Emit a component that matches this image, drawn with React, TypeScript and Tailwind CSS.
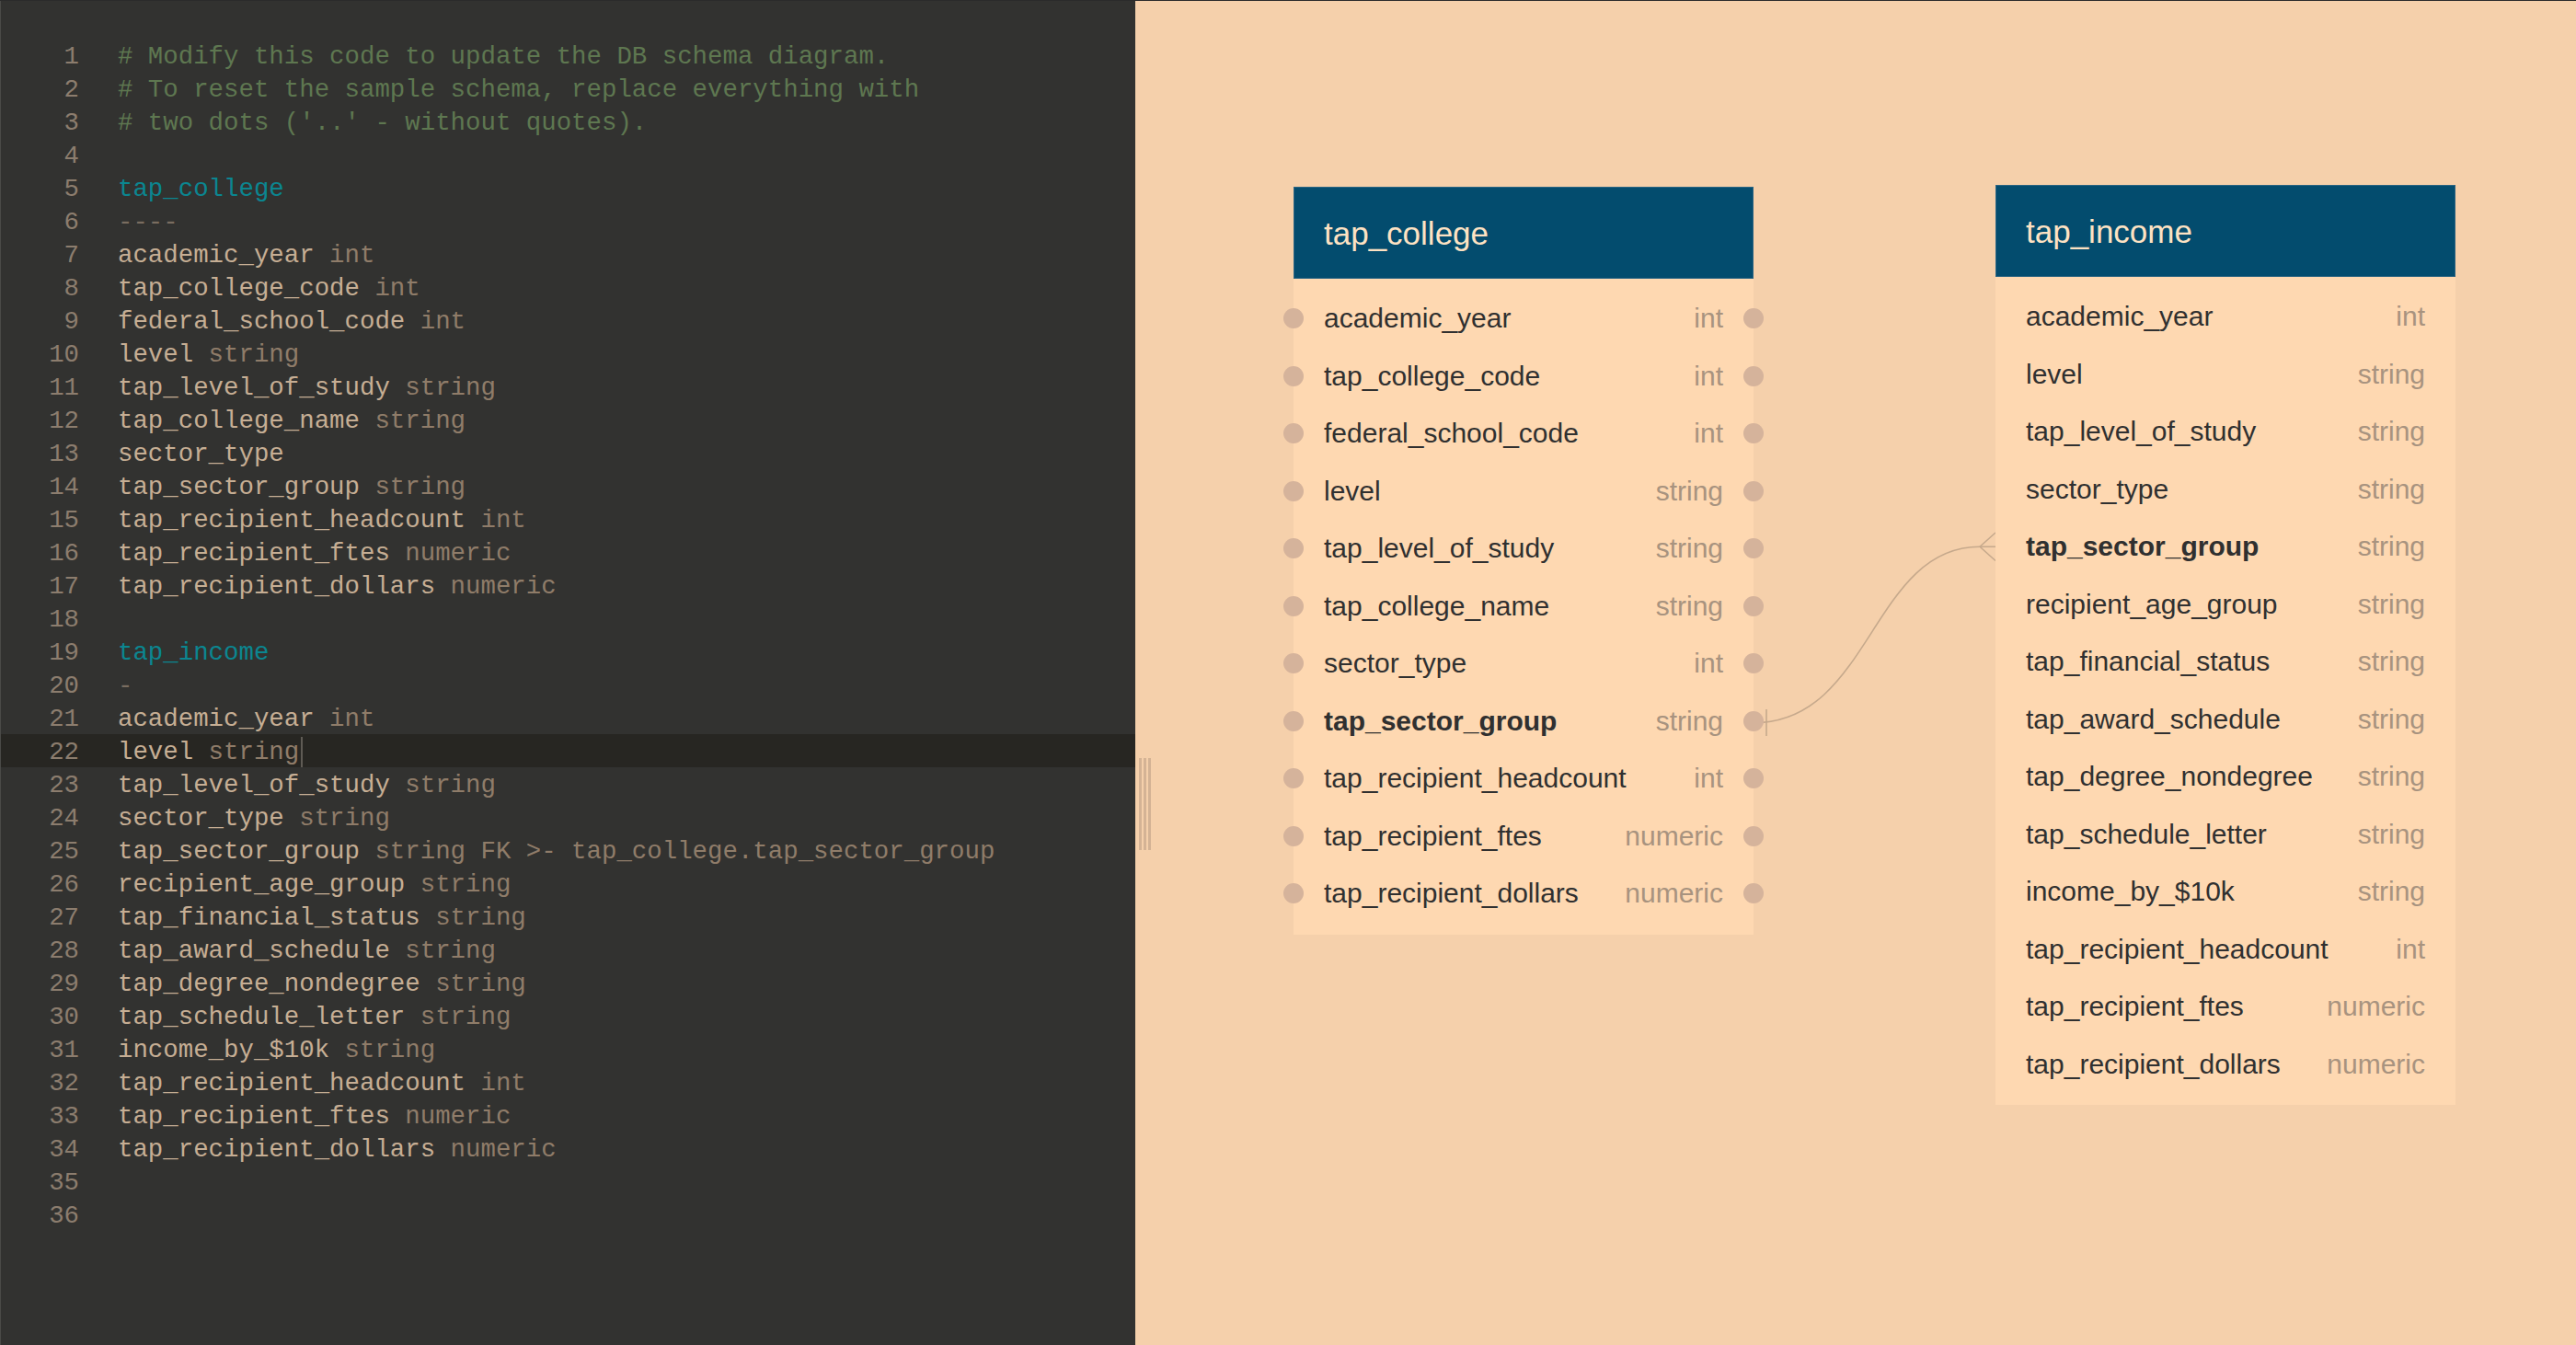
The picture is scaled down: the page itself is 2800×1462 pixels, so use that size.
import React from "react";

type Seg = { t: string; c: string };

const NAME = "text-[#c6ae94]";
const TYPE = "text-[#8f7c69]";
const COMMENT = "text-[#5e7750]";
const TABLE = "text-[#0b8690]";
const DASH = "text-[#7a6d60]";

const codeLines: Seg[][] = [
  [{ t: "# Modify this code to update the DB schema diagram.", c: COMMENT }],
  [{ t: "# To reset the sample schema, replace everything with", c: COMMENT }],
  [{ t: "# two dots ('..' - without quotes).", c: COMMENT }],
  [],
  [{ t: "tap_college", c: TABLE }],
  [{ t: "----", c: DASH }],
  [{ t: "academic_year", c: NAME }, { t: " int", c: TYPE }],
  [{ t: "tap_college_code", c: NAME }, { t: " int", c: TYPE }],
  [{ t: "federal_school_code", c: NAME }, { t: " int", c: TYPE }],
  [{ t: "level", c: NAME }, { t: " string", c: TYPE }],
  [{ t: "tap_level_of_study", c: NAME }, { t: " string", c: TYPE }],
  [{ t: "tap_college_name", c: NAME }, { t: " string", c: TYPE }],
  [{ t: "sector_type", c: NAME }],
  [{ t: "tap_sector_group", c: NAME }, { t: " string", c: TYPE }],
  [{ t: "tap_recipient_headcount", c: NAME }, { t: " int", c: TYPE }],
  [{ t: "tap_recipient_ftes", c: NAME }, { t: " numeric", c: TYPE }],
  [{ t: "tap_recipient_dollars", c: NAME }, { t: " numeric", c: TYPE }],
  [],
  [{ t: "tap_income", c: TABLE }],
  [{ t: "-", c: DASH }],
  [{ t: "academic_year", c: NAME }, { t: " int", c: TYPE }],
  [{ t: "level", c: NAME }, { t: " string", c: TYPE }],
  [{ t: "tap_level_of_study", c: NAME }, { t: " string", c: TYPE }],
  [{ t: "sector_type", c: NAME }, { t: " string", c: TYPE }],
  [
    { t: "tap_sector_group", c: NAME },
    { t: " string FK >- tap_college.tap_sector_group", c: TYPE },
  ],
  [{ t: "recipient_age_group", c: NAME }, { t: " string", c: TYPE }],
  [{ t: "tap_financial_status", c: NAME }, { t: " string", c: TYPE }],
  [{ t: "tap_award_schedule", c: NAME }, { t: " string", c: TYPE }],
  [{ t: "tap_degree_nondegree", c: NAME }, { t: " string", c: TYPE }],
  [{ t: "tap_schedule_letter", c: NAME }, { t: " string", c: TYPE }],
  [{ t: "income_by_$10k", c: NAME }, { t: " string", c: TYPE }],
  [{ t: "tap_recipient_headcount", c: NAME }, { t: " int", c: TYPE }],
  [{ t: "tap_recipient_ftes", c: NAME }, { t: " numeric", c: TYPE }],
  [{ t: "tap_recipient_dollars", c: NAME }, { t: " numeric", c: TYPE }],
  [],
  [],
];

type Row = { name: string; type: string; bold?: boolean };

const collegeRows: Row[] = [
  { name: "academic_year", type: "int" },
  { name: "tap_college_code", type: "int" },
  { name: "federal_school_code", type: "int" },
  { name: "level", type: "string" },
  { name: "tap_level_of_study", type: "string" },
  { name: "tap_college_name", type: "string" },
  { name: "sector_type", type: "int" },
  { name: "tap_sector_group", type: "string", bold: true },
  { name: "tap_recipient_headcount", type: "int" },
  { name: "tap_recipient_ftes", type: "numeric" },
  { name: "tap_recipient_dollars", type: "numeric" },
];

const incomeRows: Row[] = [
  { name: "academic_year", type: "int" },
  { name: "level", type: "string" },
  { name: "tap_level_of_study", type: "string" },
  { name: "sector_type", type: "string" },
  { name: "tap_sector_group", type: "string", bold: true },
  { name: "recipient_age_group", type: "string" },
  { name: "tap_financial_status", type: "string" },
  { name: "tap_award_schedule", type: "string" },
  { name: "tap_degree_nondegree", type: "string" },
  { name: "tap_schedule_letter", type: "string" },
  { name: "income_by_$10k", type: "string" },
  { name: "tap_recipient_headcount", type: "int" },
  { name: "tap_recipient_ftes", type: "numeric" },
  { name: "tap_recipient_dollars", type: "numeric" },
];

function DbTable({
  title,
  rows,
  dots,
  className,
}: {
  title: string;
  rows: Row[];
  dots: boolean;
  className: string;
}) {
  return (
    <div className={"absolute w-[500px] " + className}>
      <div className="h-[100px] bg-[#034c6e] border border-[#2a6482] flex items-center px-[32px]">
        <span className="text-[35px] text-[#fde2c3] leading-none">{title}</span>
      </div>
      <div className="bg-[#fed8b1] pt-[12px] pb-[13px]">
        {rows.map((r) => (
          <div
            key={r.name}
            className="relative h-[62.5px] flex items-center justify-between px-[33px]"
          >
            {dots && (
              <div className="absolute left-[-11px] top-1/2 -translate-y-1/2 w-[22px] h-[22px] rounded-full bg-[#d5b39b]" />
            )}
            <span
              className={
                "text-[30px] leading-none text-[#303030] " +
                (r.bold ? "font-bold" : "")
              }
            >
              {r.name}
            </span>
            <span className="text-[30px] leading-none text-[#a8937f]">{r.type}</span>
            {dots && (
              <div className="absolute right-[-11px] top-1/2 -translate-y-1/2 w-[22px] h-[22px] rounded-full bg-[#d5b39b]" />
            )}
          </div>
        ))}
      </div>
    </div>
  );
}

export default function App() {
  return (
    <div className="w-[2800px] h-[1462px] flex flex-col overflow-hidden">
      <div className="h-px bg-[#2b2b2b] shrink-0" />
      <div className="flex flex-1 min-h-0">
        {/* Editor */}
        <div
          className="w-[1234px] shrink-0 bg-[#323230] border-l border-[#4a4a47] pt-[41px]"
          style={{ fontFamily: '"Liberation Mono", "DejaVu Sans Mono", monospace' }}
        >
          {codeLines.map((segs, i) => {
            const active = i === 21;
            return (
              <div
                key={i}
                className={
                  "flex items-center h-[36px] pt-[3px] text-[27.4px] whitespace-pre " +
                  (active ? "bg-[#272622]" : "")
                }
              >
                <span className="w-[85px] text-right text-[#8c7d6e] shrink-0">{i + 1}</span>
                <span className="ml-[42px] flex items-center">
                  {segs.map((s, j) => (
                    <span key={j} className={s.c}>
                      {s.t}
                    </span>
                  ))}
                  {active && <span className="ml-[2px] w-[2px] h-[33px] bg-[#5f5b55]" />}
                </span>
              </div>
            );
          })}
        </div>

        {/* Diagram canvas */}
        <div
          className="relative flex-1 bg-[#f5d0ab]"
          style={{ fontFamily: '"Liberation Sans", Arial, sans-serif' }}
        >
          {/* resize handle */}
          <div className="absolute left-[4px] top-[823px] flex gap-[2px]">
            <div className="w-[3px] h-[100px] bg-[#d4b395]" />
            <div className="w-[3px] h-[100px] bg-[#d4b395]" />
            <div className="w-[3px] h-[100px] bg-[#d4b395]" />
          </div>

          <svg
            className="absolute left-0 top-0"
            width="1566"
            height="1461"
            viewBox="0 0 1566 1461"
            fill="none"
          >
            <path
              d="M 672 784.75 C 800 784.75, 800 593.25, 918 593.25 L 935 593.25"
              stroke="#c6a98c"
              strokeWidth="1.6"
            />
            <path d="M 686 770 L 686 799" stroke="#c6a98c" strokeWidth="1.6" />
            <path
              d="M 918 593.25 L 935 578 M 918 593.25 L 935 608.5"
              stroke="#c6a98c"
              strokeWidth="1.6"
            />
          </svg>

          <DbTable
            title="tap_college"
            rows={collegeRows}
            dots={true}
            className="left-[172px] top-[202px]"
          />
          <DbTable
            title="tap_income"
            rows={incomeRows}
            dots={false}
            className="left-[935px] top-[200px]"
          />
        </div>
      </div>
    </div>
  );
}
